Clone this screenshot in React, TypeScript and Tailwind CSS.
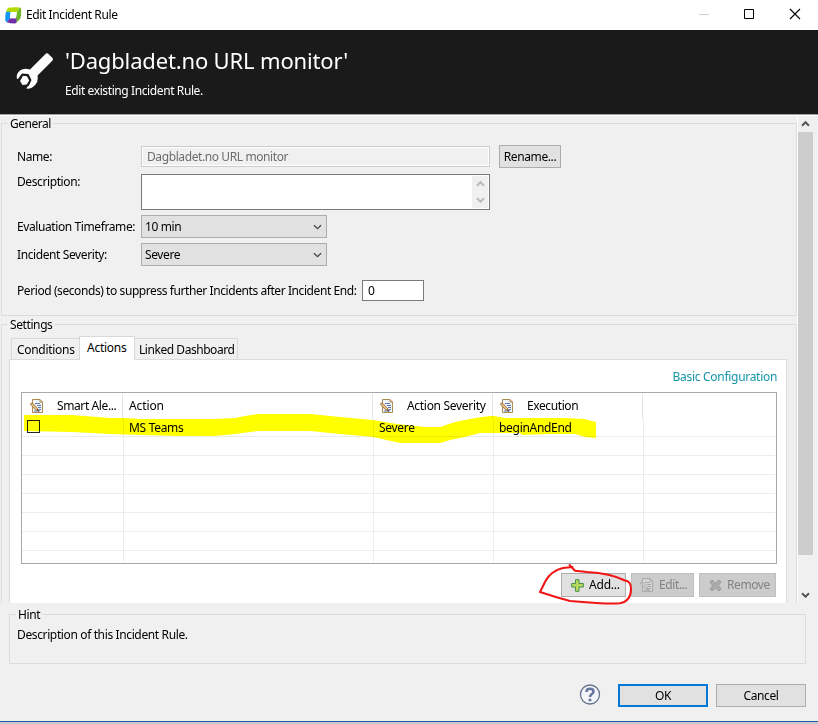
import React from "react";

function AppLogo() {
  return (
    <svg className="h-[17px] w-[17px] shrink-0" viewBox="0 0 17 17">
      <path d="M3.500 .8Q9 -.3 15 .5L12 5H1Q1.800 1.800 3.500 .8Z" fill="#b4dc00" />
      <path d="M15 .5Q16.400 1.200 16.200 3Q16.300 8 15.400 11.500L11.500 15.800L11 11.500L12 5Z" fill="#6cb52d" />
      <path d="M1 4.800H5.600L5 11.500L1.600 15.200Q.4 14.500 .3 13Q0 8.500 1 4.800Z" fill="#1496ff" />
      <path d="M5 11.300H11.500L11.500 15.800Q10.800 16.600 9.500 16.500Q5 16.500 1.700 15.300Z" fill="#6f2da8" />
      <path d="M5.600 5.200H11.400L10.800 11.300H5Z" fill="#fff" />
    </svg>
  );
}

function Wrench() {
  return (
    <svg className="h-[38px] w-[38px] shrink-0" viewBox="0 0 38 38">
      <path d="M30 1.500Q31 .9 32 1.500L36.500 6Q37.300 7.300 36.500 8.500L21.500 23.500Q22.500 29 19.500 32.500Q16 37 10.500 36.700Q10.500 35 13 33.500L15.500 28L12.500 22L6 21.500L2.300 26.500L1 27Q-.3 22 4 18.500Q8 15.500 14 17.500Z" fill="#fff" />
      <path d="M7 23.800L11 24.300L13.200 28.500L10.700 32.500L6.500 33L4 29Z" fill="#fff" />
    </svg>
  );
}

function DocIcon({ disabled = false }: { disabled?: boolean }) {
  const edge = disabled ? "#a9a9a9" : "#ad8b4b";
  const line = disabled ? "#a6a6a6" : "#6079aa";
  return (
    <svg className="h-[15px] w-[14px] shrink-0" viewBox="0 0 14 15">
      <path d="M2.500 .5H10L12.500 3V13.500H2.500Z" fill={disabled ? "#d4d4d4" : "#f1f5fb"} stroke={edge} />
      <path d="M10 .5V3H12.500" fill="none" stroke={edge} />
      <path d="M5 4.500H10M7 6.500H11M8 8.500H11M9 10.500H11M4 12H10" stroke={line} fill="none" />
      <path d="M1 4L3.500 5L8 10L8.500 12L6 11L.7 6Z" fill={disabled ? "#c9c9c9" : "#e2bd82"} stroke={disabled ? "#a5a5a5" : "#9b6d3b"} strokeWidth=".8" />
      <path d="M7 11L9 13L8 10Z" fill={disabled ? "#999" : "#333"} />
    </svg>
  );
}

function Chevron({ up = false, className }: { up?: boolean; className: string }) {
  return (
    <svg className={className} viewBox="0 0 9 6" fill="none" stroke="currentColor">
      <path d={up ? "M1 4.700L4.500 1.200L8 4.700" : "M1 1.200L4.500 4.700L8 1.200"} />
    </svg>
  );
}

function Group({ title, className, legendClass, children }: { title: string; className: string; legendClass: string; children: React.ReactNode }) {
  return (
    <section className={`border border-[#dcdcdc] ${className}`}>
      <div className={`h-4 w-fit bg-[#f0f0f0] leading-4 ${legendClass}`}>{title}</div>
      {children}
    </section>
  );
}

function Select({ value }: { value: string }) {
  return (
    <div className="flex h-[23px] w-[186px] items-center justify-between border border-[#adadad] bg-[#e1e1e1] pr-1 pl-[3px]">
      <span className="tracking-[-0.4px]">{value}</span>
      <Chevron className="h-[6px] w-[9px] stroke-[1.3] text-[#444]" />
    </div>
  );
}

const headers = [
  { label: "Smart Ale...", icon: true, cell: "w-[101px] pl-2", text: "ml-[13px]" },
  { label: "Action", icon: false, cell: "w-[250px] pl-[6px]", text: "tracking-[-0.1px]" },
  { label: "Action Severity", icon: true, cell: "w-[120px] pl-[7px]", text: "ml-[13px] tracking-[-0.3px]" },
  { label: "Execution", icon: true, cell: "w-[150px] pl-[7px]", text: "ml-[13px]" },
];

const emptyRows = [0, 1, 2, 3, 4, 5];

function RowCells({ values }: { values: string[] }) {
  return (
    <>
      <div className="w-[102px] border-r border-[#ececec] pl-[5px]">
        {values[0] !== undefined && <div className="mt-[2px] h-[13px] w-[13px] border border-[#222]" />}
      </div>
      <div className="w-[250px] border-r border-[#ececec] pl-[5px]">{values[0]}</div>
      <div className="w-[120px] border-r border-[#ececec] pl-[5px]">{values[1]}</div>
      <div className="w-[150px] border-r border-[#ececec] pl-[5px]">{values[2]}</div>
    </>
  );
}

function ActionsTable() {
  return (
    <div className="relative h-[172px] w-[756px] border border-[#a8a8ac] bg-white">
      <div className="flex h-[25px] pt-px">
        {headers.map((h) => (
          <div key={h.label} className={`flex items-center border-r border-[#e4e4e4] ${h.cell}`}>
            {h.icon && <DocIcon />}
            <span className={`whitespace-nowrap ${h.text}`}>{h.label}</span>
          </div>
        ))}
      </div>
      <div className="mx-px">
        <div className="-ml-px flex h-[19px] border-b border-[#ececec] leading-[20px] tracking-[-0.3px]">
          <RowCells values={["MS Teams", "Severe", "beginAndEnd"]} />
        </div>
        {emptyRows.map((r) => (
          <div key={r} className="-ml-px flex h-[19px] border-b border-[#ececec]">
            <RowCells values={[]} />
          </div>
        ))}
        <div className="-ml-px flex h-[11px]"><RowCells values={[]} /></div>
      </div>
      <svg className="pointer-events-none absolute top-[19px] left-[2px] mix-blend-multiply" width="574" height="34" viewBox="24 412 574 34">
        <path fill="#ff0" d="M24 415H72L110 418H123L142 419H215L235 418L245 416L258 414H310L340 417L373 420L397 424L425 427H440L455 422L475 418L490 416H494L505 418H565L584 419L596 422V438L585 437L575 434H550L522 435L520 433L480 433L465 437L450 440L440 443H400L373 437L340 434L310 431H258L235 434L215 436H178L142 435L110 434L72 432L24 431Z" />
      </svg>
    </div>
  );
}

function Header() {
  return (
    <>
      <div className="flex h-[30px] items-center bg-white pl-[5px]">
        <AppLogo />
        <span className="ml-1">Edit Incident Rule</span>
        <svg className="ml-auto h-[30px] w-[120px]" viewBox="698 0 120 30" fill="none" stroke="#000">
          <path d="M699 14.500H709" stroke="#ccc" />
          <path d="M744.500 9.500H753.500V18.500H744.500Z" />
          <path d="M790 9L800 19M800 9L790 19" strokeWidth="1.100" />
        </svg>
      </div>
      <div className="flex h-[85px] border-b border-[#a0a0a0] bg-[#1a1a1a] pl-4 text-white">
        <div className="pt-[22px]"><Wrench /></div>
        <div className="ml-[11px] pt-[14px]">
          <h1 className="text-[22px] leading-8 tracking-[-0.16px] whitespace-nowrap">'Dagbladet.no URL monitor'</h1>
          <p className="mt-[7px] leading-4">Edit existing Incident Rule.</p>
        </div>
      </div>
    </>
  );
}

function General() {
  return (
    <Group title="General" className="ml-px h-[193px] w-[796px]" legendClass="-mt-2 ml-[6px] px-[2px] tracking-[-0.5px]">
      <div className="mt-[13px] grid grid-cols-[124px_349px_auto] items-start pl-[15px]">
        <label className="mt-[4px] leading-4">Name:</label>
        <div className="mt-px h-[21px] border border-[#ccc] p-px">
          <div className="h-full bg-[#f0f0f0] pl-[4px] leading-[17px] text-[#6d6d6d] ring-1 ring-white">Dagbladet.no URL monitor</div>
        </div>
        <button className="ml-[9px] h-[23px] w-[62px] border border-[#adadad] bg-[#e1e1e1]">Rename...</button>
      </div>
      <div className="mt-[6px] flex pl-[15px]">
        <label className="w-[124px] leading-4">Description:</label>
        <div className="flex h-[36px] w-[349px] justify-end border border-[#7a7a7a] bg-white p-px">
          <div className="flex w-4 flex-col items-center justify-between bg-[#f0f0f0] py-[5px] text-[#b8b8b8]">
            <Chevron up className="h-[6px] w-[9px] stroke-2" />
            <Chevron className="h-[6px] w-[9px] stroke-2" />
          </div>
        </div>
      </div>
      <div className="mt-[5px] grid grid-cols-[124px_186px] items-center gap-y-[5px] pl-[15px]">
        <label className="whitespace-nowrap">Evaluation Timeframe:</label>
        <Select value="10 min" />
        <label>Incident Severity:</label>
        <Select value="Severe" />
      </div>
      <div className="mt-[14px] flex items-center pl-[15px]">
        <label className="w-[345px] tracking-[-0.42px] whitespace-nowrap">Period (seconds) to suppress further Incidents after Incident End:</label>
        <div className="h-[21px] w-[62px] border border-[#7a7a7a] bg-white pl-[5px] leading-[19px]">0</div>
      </div>
    </Group>
  );
}

function Settings() {
  return (
    <Group title="Settings" className="mt-[8px] ml-px h-[290px] w-[796px]" legendClass="-mt-2 ml-[6px] px-[2px]">
      <div className="mt-[3px] flex h-[23px] items-end pl-[9px]">
        <div className="h-[21px] w-[69px] border border-r-0 border-b-0 border-[#d9d9d9] pl-[5px] leading-[22px] tracking-[-0.3px]">Conditions</div>
        <div className="z-10 -mr-px -ml-px -mb-px h-[24px] w-[56px] border border-b-0 border-[#d9d9d9] bg-white pl-[7px] leading-[22px] tracking-[-0.25px]">Actions</div>
        <div className="h-[21px] w-[104px] border border-b-0 border-[#d9d9d9] pl-[4px] leading-[22px] tracking-[-0.45px] whitespace-nowrap">Linked Dashboard</div>
      </div>
      <div className="ml-[7px] h-[250px] w-[778px] border border-[#dcdcdc] bg-white pl-[11px]">
        <div className="flex h-8 w-[756px] justify-end pt-[9px] leading-4 tracking-[-0.3px] text-[#1496a9]">Basic Configuration</div>
        <ActionsTable />
        <div className="mt-[9px] flex w-[755px] justify-end gap-[5px]">
          <button className="flex h-[24px] w-[65px] items-center border border-[#adadad] bg-[#e1e1e1] pl-[9px]">
            <svg className="h-[13px] w-[13px]" viewBox="0 0 13 13">
              <path d="M4.500 .7H8V4.500H12.300V8H8V12.300H4.500V8H.7V4.500H4.500Z" fill="#b6d957" stroke="#469047" />
            </svg>
            <span className="ml-[5px] tracking-[-0.2px]">Add...</span>
          </button>
          <button className="flex h-[24px] w-[63px] items-center border border-[#bfbfbf] bg-[#ccc] pl-[8px] text-[#838383]">
            <DocIcon disabled /><span className="ml-[5px]">Edit...</span>
          </button>
          <button className="flex h-[24px] w-[77px] items-center border border-[#bfbfbf] bg-[#ccc] pl-[9px] text-[#838383]">
            <svg className="h-[13px] w-[13px]" viewBox="0 0 13 13">
              <path d="M1 3L3 1L6.500 4L10 1L12 3L9.500 6.500L12 10L10 12L6.500 9L3 12L1 10L3.500 6.500Z" fill="#aaa" stroke="#9d9d9d" />
            </svg>
            <span className="ml-[5px]">Remove</span>
          </button>
        </div>
      </div>
    </Group>
  );
}

function Footer() {
  return (
    <>
      <Group title="Hint" className="mt-[11px] ml-[9px] h-[50px] w-[797px]" legendClass="-mt-2 ml-[6px] px-[2px]">
        <p className="mt-[4px] pl-[7px] leading-4 tracking-[-0.37px]">Description of this Incident Rule.</p>
      </Group>
      <div className="mt-5 flex pl-[579px]">
        <svg className="h-[22px] w-[22px]" viewBox="0 0 22 22">
          <circle cx="11" cy="10.500" r="9.500" fill="#f5f6f9" stroke="#66748f" strokeWidth="1.300" />
          <path d="M7.500 8Q7.500 4.800 11 4.800Q14.500 4.800 14.500 7.700C14.500 10.200 11 9.800 11 13" fill="none" stroke="#66779d" strokeWidth="2.500" />
          <circle cx="11" cy="16" r="1.600" fill="#66779d" />
        </svg>
        <button className="ml-[17px] h-[23px] w-[90px] border-2 border-[#0078d7] bg-[#e1e1e1] leading-[19px]">OK</button>
        <button className="ml-[8px] h-[23px] w-[90px] border border-[#adadad] bg-[#e1e1e1]">Cancel</button>
      </div>
    </>
  );
}

export default function App() {
  return (
    <main className="relative flex h-[724px] w-[818px] flex-col overflow-hidden bg-[#f0f0f0] font-['Noto_Sans','Open_Sans',sans-serif] text-[12px] tracking-[-0.4px] text-black">
      <Header />
      <div className="flex h-[488px] shrink-0 border-t border-white">
        <div className="h-full w-[797px] overflow-hidden pt-[7px]">
          <General />
          <Settings />
        </div>
        <div className="flex w-4 flex-col items-center border-l border-white">
          <div className="flex h-4 items-center"><Chevron up className="h-[6px] w-[9px] stroke-2 text-[#555]" /></div>
          <div className="h-[423px] w-full bg-[#cdcdcd]" />
          <div className="mt-auto flex h-4 items-center"><Chevron className="h-[6px] w-[9px] stroke-2 text-[#555]" /></div>
        </div>
      </div>
      <Footer />
      <div className="mt-auto h-[3px] shrink-0 border-t border-[#1d5a9e] bg-[#c9c9cd]" />
      <svg className="pointer-events-none absolute top-[562px] left-[536px]" width="100" height="44" viewBox="536 562 100 44" fill="none" stroke="#f01414" strokeWidth="2" strokeLinecap="round" strokeLinejoin="round">
        <path d="M572.500 567L563 568Q551 571 545.500 581L540 592Q555 597 570 601L586 602.300Q607 604 620 603.300Q631 601 631 589Q631 581 625 580.500C614 575 604 573 587 572L575 570.700L569.500 565" />
      </svg>
    </main>
  );
}
